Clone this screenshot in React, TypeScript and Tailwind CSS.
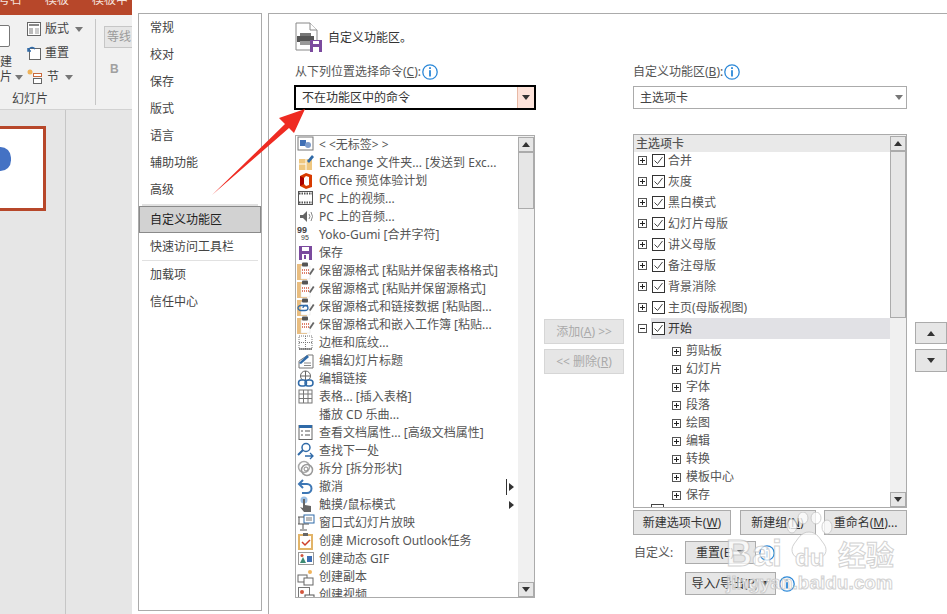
import type { ReactNode } from "react";

const navTop = ["常规", "校对", "保存", "版式", "语言", "辅助功能", "高级"];

type Cmd = { icon: string; label: string; arrow?: boolean; caret?: boolean };

const commands: Cmd[] = [
  { icon: "picture", label: "< <无标签> >" },
  { icon: "exchange", label: "Exchange 文件夹... [发送到 Exc..." },
  { icon: "office", label: "Office 预览体验计划" },
  { icon: "film", label: "PC 上的视频..." },
  { icon: "speaker", label: "PC 上的音频..." },
  { icon: "yoko", label: "Yoko-Gumi [合并字符]" },
  { icon: "save", label: "保存" },
  { icon: "paste", label: "保留源格式 [粘贴并保留表格格式]" },
  { icon: "paste", label: "保留源格式 [粘贴并保留源格式]" },
  { icon: "pastelink", label: "保留源格式和链接数据 [粘贴图..." },
  { icon: "paste", label: "保留源格式和嵌入工作簿 [粘贴..." },
  { icon: "border", label: "边框和底纹..." },
  { icon: "title", label: "编辑幻灯片标题" },
  { icon: "link", label: "编辑链接" },
  { icon: "table", label: "表格... [插入表格]" },
  { icon: "none", label: "播放 CD 乐曲..." },
  { icon: "props", label: "查看文档属性... [高级文档属性]" },
  { icon: "find", label: "查找下一处" },
  { icon: "split", label: "拆分 [拆分形状]" },
  { icon: "undo", label: "撤消", arrow: true, caret: true },
  { icon: "touch", label: "触摸/鼠标模式", arrow: true },
  { icon: "window", label: "窗口式幻灯片放映" },
  { icon: "task", label: "创建 Microsoft Outlook任务" },
  { icon: "gif", label: "创建动态 GIF" },
  { icon: "copy", label: "创建副本" },
  { icon: "video", label: "创建视频" },
];

const tabs = ["合并", "灰度", "黑白模式", "幻灯片母版", "讲义母版", "备注母版", "背景消除", "主页(母版视图)"];
const groups = ["剪贴板", "幻灯片", "字体", "段落", "绘图", "编辑", "转换", "模板中心", "保存"];

function CmdIcon({ name }: { name: string }) {
  const box = "h-[18px] w-[18px]";
  const wrap = (c: ReactNode) => (
    <svg viewBox="0 0 18 18" className={box}>
      {c}
    </svg>
  );
  switch (name) {
    case "picture":
      return wrap(
        <>
          <rect x="1" y="1" width="15" height="13" fill="#fff" stroke="#777" />
          <rect x="3" y="4" width="6" height="6" fill="#3f6fb5" />
          <circle cx="11" cy="9" r="3" fill="#7d9ccb" />
        </>,
      );
    case "exchange":
      return wrap(
        <>
          <path d="M2 5h7l6 0v11H2z" fill="#efc77f" />
          <path d="M9 5v5H2M9 10v6" stroke="#fff" fill="none" />
          <path d="M10 7l5-6 2 2-5 6z" fill="#2f6aa8" />
        </>,
      );
    case "office":
      return wrap(
        <>
          <path d="M9 1l6 2v12l-6 2-6-3V4z" fill="#d83b01" />
          <path d="M9 4l3 1v8l-3 1-2-2V6z" fill="#fff" />
          <path d="M3 4l4 2v6l-4 2z" fill="#a80000" />
        </>,
      );
    case "film":
      return wrap(
        <>
          <rect x="1.500" y="1.500" width="14" height="13" fill="#fff" stroke="#555" />
          <path d="M2 3.500h13M2 12.500h13" stroke="#555" strokeWidth="2" strokeDasharray="1.500 1" />
        </>,
      );
    case "speaker":
      return wrap(
        <>
          <path d="M3 7h3l4-4v11l-4-4H3z" fill="#666" />
          <path d="M12 6q2 2.500 0 5M14 4q3 4.500 0 9" stroke="#888" fill="none" />
        </>,
      );
    case "yoko":
      return (
        <div className="h-[18px] w-[18px] text-[9px] leading-[8px] text-[#444] [font-family:'Liberation_Sans',sans-serif]">
          <div className="font-bold">99</div>
          <div className="pl-[4px] text-[7px]">95</div>
        </div>
      );
    case "save":
      return wrap(
        <>
          <path d="M2 2h13v14H2z" fill="#7b4a9e" />
          <rect x="5" y="3" width="7" height="4" fill="#fff" />
          <rect x="5" y="10" width="7" height="6" fill="#fff" />
          <rect x="7" y="11" width="2" height="4" fill="#7b4a9e" />
        </>,
      );
    case "paste":
    case "pastelink":
      return wrap(
        <>
          <rect x="0" y="2" width="10" height="16" fill="#e9bd7f" />
          <rect x="4" y="4" width="9" height="13" fill="#fff" stroke="#ddd" strokeWidth="0.500" />
          <rect x="5" y="0.500" width="6" height="4" rx="1" fill="#555" />
          {name === "paste" ? (
            <path d="M5 8h7M5 11h7" stroke="#d2553c" strokeWidth="1.500" strokeDasharray="1 1" />
          ) : (
            <path d="M1 10a3 2.500 0 013-2.500h4a3 2.500 0 010 5H4a3 2.500 0 01-3-2.500zM6 10a3 2.500 0 013-2.500h2" fill="none" stroke="#2f6aa8" strokeWidth="1.300" />
          )}
          <path d="M12 12l4-6 1.500 1-4 6z" fill="#666" />
        </>,
      );
    case "border":
      return wrap(
        <>
          <rect x="2" y="2" width="13" height="13" fill="none" stroke="#777" strokeDasharray="1 1" />
          <path d="M2 8.500h13M8.500 2v13" stroke="#777" strokeDasharray="1 1" />
          <path d="M2 15h13" stroke="#444" />
        </>,
      );
    case "title":
      return wrap(
        <>
          <path d="M2 16V9l9-6h5v13z" fill="#fff" stroke="#777" />
          <path d="M2 11l8-8 2 2-8 7z" fill="#2f6aa8" />
          <path d="M7 11h7M7 13.500h7" stroke="#888" />
        </>,
      );
    case "link":
      return wrap(
        <>
          <circle cx="8.500" cy="6" r="5" fill="none" stroke="#666" />
          <path d="M4 6h9M8.500 1v9" stroke="#666" />
          <rect x="1.500" y="10" width="8" height="6" rx="3" fill="#fff" stroke="#2f6aa8" strokeWidth="1.500" />
          <rect x="8" y="10" width="8" height="6" rx="3" fill="none" stroke="#2f6aa8" strokeWidth="1.500" />
        </>,
      );
    case "table":
      return wrap(
        <>
          <rect x="2" y="2" width="13" height="13" fill="#fff" stroke="#777" />
          <path d="M2 6h13M2 10.500h13M6.500 2v13M11 2v13" stroke="#777" />
        </>,
      );
    case "props":
      return wrap(
        <>
          <rect x="2" y="1.500" width="13" height="14" fill="#fff" stroke="#666" />
          <rect x="2" y="1" width="13" height="3" fill="#2f6aa8" />
          <path d="M4 7h2M8 7h5M4 11h2M8 11h5" stroke="#555" />
        </>,
      );
    case "find":
      return wrap(
        <>
          <circle cx="9" cy="5.500" r="4" fill="none" stroke="#2f6aa8" strokeWidth="1.500" />
          <path d="M6 8l-5 5" stroke="#2f6aa8" strokeWidth="2" />
          <path d="M8 14h8M13 11l3 3-3 3" stroke="#2f6aa8" strokeWidth="1.300" fill="none" />
        </>,
      );
    case "split":
      return wrap(
        <>
          <circle cx="7" cy="7" r="5.500" fill="none" stroke="#aaa" strokeWidth="1.500" />
          <circle cx="10" cy="10" r="5.500" fill="none" stroke="#999" strokeWidth="1.500" />
          <circle cx="9" cy="9" r="2" fill="none" stroke="#888" />
        </>,
      );
    case "undo":
      return wrap(
        <path d="M6 2L2 6l4 4M2 6h8a4 4 0 010 9H5" fill="none" stroke="#3d77b5" strokeWidth="2" />,
      );
    case "touch":
      return wrap(
        <>
          <circle cx="7" cy="4" r="3.500" fill="#9dc0e4" />
          <path d="M6 3h2v6l6 1v6H7l-4-5 3 1z" fill="#666" />
        </>,
      );
    case "window":
      return wrap(
        <>
          <rect x="7" y="1" width="10" height="8" fill="#fff" stroke="#2f6aa8" />
          <path d="M9 4h6M9 6h6" stroke="#777" />
          <path d="M1 3h6M1 10h11M6 10v5M3 16h7M2 3v7" stroke="#555" fill="none" />
        </>,
      );
    case "task":
      return wrap(
        <>
          <rect x="2" y="3" width="13" height="14" fill="#fff" stroke="#e2b468" strokeWidth="2" />
          <rect x="6" y="1" width="5" height="3" fill="#666" />
          <path d="M5 10l3 3 5-5" fill="none" stroke="#cf3f2b" strokeWidth="1.500" />
        </>,
      );
    case "gif":
      return wrap(
        <>
          <rect x="1.500" y="2.500" width="15" height="12" fill="#fff" stroke="#999" />
          <path d="M3 13l3-6 3 6z" fill="#3d8b74" />
          <circle cx="5" cy="5.500" r="1.500" fill="#d2553c" />
          <rect x="10" y="6" width="5" height="6" fill="#3f6fb5" />
        </>,
      );
    case "copy":
      return wrap(
        <>
          <rect x="1" y="7" width="9" height="7" fill="#fff" stroke="#666" />
          <rect x="7" y="10" width="9" height="7" fill="#fff" stroke="#666" />
          <circle cx="13" cy="4" r="2" fill="#f0b35a" />
        </>,
      );
    case "video":
      return wrap(
        <>
          <rect x="1.500" y="1.500" width="11" height="13" fill="#fff" stroke="#777" />
          <circle cx="5" cy="6" r="2" fill="#d2553c" />
          <rect x="8" y="9" width="9" height="8" fill="#fff" stroke="#555" />
        </>,
      );
    default:
      return <div className={box} />;
  }
}

function Info() {
  return (
    <svg viewBox="0 0 16 16" className="h-4 w-4 shrink-0">
      <circle cx="8" cy="8" r="7.200" fill="#fff" stroke="#2b88d8" strokeWidth="1.300" />
      <rect x="7.100" y="3.200" width="1.800" height="1.800" fill="#2b88d8" />
      <rect x="7.100" y="6.200" width="1.800" height="6.300" fill="#2b88d8" />
    </svg>
  );
}

function Expander({ open }: { open?: boolean }) {
  return (
    <svg viewBox="0 0 9 9" className="h-[9px] w-[9px] shrink-0">
      <rect x="0.500" y="0.500" width="8" height="8" fill="#fff" stroke="#555" />
      <path d="M2 4.500h5" stroke="#222" />
      {!open && <path d="M4.500 2v5" stroke="#222" />}
    </svg>
  );
}

function Check() {
  return (
    <svg viewBox="0 0 13 13" className="h-[13px] w-[13px] shrink-0">
      <rect x="0.500" y="0.500" width="12" height="12" fill="#fff" stroke="#333" />
      <path d="M2.500 6.500l3 3 5-6.500" fill="none" stroke="#444" />
    </svg>
  );
}

function Tri({ up, className }: { up?: boolean; className?: string }) {
  return (
    <svg viewBox="0 0 8 5" className={`h-[5px] w-[8px] ${className ?? "fill-[#333]"}`}>
      <path d={up ? "M4 0l4 5H0z" : "M0 0h8L4 5z"} />
    </svg>
  );
}

function ScrollBar({ thumb, topGap }: { thumb: number; topGap: number }) {
  return (
    <div className="flex h-full w-[16px] shrink-0 flex-col bg-[#f0f0f0]" style={{ paddingTop: topGap }}>
      <div className="flex h-[15px] items-center justify-center border border-[#ababab] bg-[#e6e6e6]">
        <Tri up />
      </div>
      <div className="border border-[#ababab] bg-[#e6e6e6]" style={{ height: thumb }} />
      <div className="flex-1" />
      <div className="flex h-[15px] items-center justify-center border border-[#ababab] bg-[#e6e6e6]">
        <Tri />
      </div>
    </div>
  );
}

function Btn({ className, children }: { className: string; children: ReactNode }) {
  return (
    <div className={`flex items-center justify-center border bg-[#e6e6e6] ${className}`}>
      {children}
    </div>
  );
}

function Ribbon() {
  return (
    <>
      <div className="flex h-[15px] items-end gap-[23px] overflow-hidden bg-[#b7472a] pb-[9px] text-[12px] leading-[12px] whitespace-nowrap text-[#f5e3de]">
        <span className="-ml-[2px]">号名</span>
        <span>模板</span>
        <span>模板中</span>
      </div>
      <div className="flex h-[95px] overflow-hidden border-b border-[#d2d2d2] bg-[#f1f1f1] text-[12px] text-[#444]">
        <div className="flex w-[95px] shrink-0 flex-col">
          <div className="flex h-[75px]">
            <div className="w-[27px] shrink-0 overflow-hidden pt-[10px]">
              <div className="-ml-[8px] h-[22px] w-[18px] rounded-[2px] border border-[#777] bg-white" />
              <div className="mt-[7px] leading-[16px]">建</div>
              <div className="flex items-center gap-[3px] leading-[14px]">
                片<Tri className="fill-[#777]" />
              </div>
            </div>
            <div className="flex flex-col pt-[2px] leading-[24px]">
              <div className="flex items-center gap-[4px]">
                <svg viewBox="0 0 14 14" className="h-[14px] w-[14px]">
                  <rect x="0.500" y="0.500" width="13" height="13" fill="#fff" stroke="#666" />
                  <path d="M2 3h10" stroke="#888" strokeWidth="2" />
                  <rect x="2" y="6" width="4" height="6" fill="#bbb" />
                  <path d="M8 7h4M8 9h4M8 11h4" stroke="#999" />
                </svg>
                版式
                <Tri className="ml-[2px] fill-[#777]" />
              </div>
              <div className="flex items-center gap-[4px]">
                <svg viewBox="0 0 14 14" className="h-[14px] w-[14px]">
                  <rect x="2.500" y="2.500" width="11" height="11" fill="#fff" stroke="#666" />
                  <path d="M1 5a4 4 0 017-2M1 2v3h3" fill="none" stroke="#2f6aa8" strokeWidth="1.500" />
                </svg>
                重置
              </div>
              <div className="flex items-center gap-[4px]">
                <svg viewBox="0 0 16 16" className="h-[16px] w-[16px]">
                  <circle cx="3" cy="3" r="2.500" fill="#f0b35a" />
                  <rect x="6.500" y="4.500" width="8" height="3" fill="#fff" stroke="#c96a3e" />
                  <rect x="6.500" y="9.500" width="8" height="5" fill="#fff" stroke="#666" />
                </svg>
                节
                <Tri className="ml-[2px] fill-[#777]" />
              </div>
            </div>
          </div>
          <div className="pl-[12px] leading-[18px]">幻灯片</div>
        </div>
        <div className="mt-[4px] h-[86px] w-px shrink-0 bg-[#c6c6c6]" />
        <div className="flex-1 overflow-hidden pt-[11px] pl-[8px]">
          <div className="flex h-[22px] w-[40px] items-center border border-[#c6c6c6] bg-[#e6e6e6] pl-[2px] whitespace-nowrap text-[#9a9a9a]">
            等线
          </div>
          <div className="mt-[12px] pl-[6px] text-[12px] font-bold text-[#a0a0a0] [font-family:'Liberation_Sans',sans-serif]">
            B
          </div>
        </div>
      </div>
    </>
  );
}

function Slides() {
  return (
    <div className="flex flex-1 bg-[#e6e6e6]">
      <div className="w-[66px] shrink-0 border-r border-[#c6c6c6] pt-[16px]">
        <div className="-ml-[3px] flex h-[85px] w-[49px] items-center overflow-hidden border-[3px] border-[#b7472a] bg-white">
          <div className="mb-[20px] -ml-[10px] h-[24px] w-[21px] rounded-full bg-[#4472c4]" />
        </div>
      </div>
    </div>
  );
}

function Nav() {
  const item = "flex h-[27px] items-center pl-[11px]";
  return (
    <div className="mt-[13px] mb-[3px] ml-[6px] flex w-[124px] shrink-0 flex-col border border-[#ababab] bg-white text-[12px] text-[#444]">
      {navTop.map((n) => (
        <div key={n} className={item}>
          {n}
        </div>
      ))}
      <div className="mx-[3px] mt-[1px] h-[2px] bg-[#e1e1e1]" />
      <div className="flex h-[27px] items-center border border-[#8a8a8a] bg-[#d2d2d2] pl-[10px] text-[#222]">
        自定义功能区
      </div>
      <div className={item}>快速访问工具栏</div>
      <div className="mx-[3px] h-px bg-[#e1e1e1]" />
      <div className={item}>加载项</div>
      <div className={item}>信任中心</div>
    </div>
  );
}

function CommandList() {
  return (
    <div className="flex h-[463px] w-[240px] overflow-hidden border border-[#ababab] bg-white">
      <div className="min-w-0 flex-1 overflow-hidden">
        {commands.map((c) => (
          <div key={c.label} className="flex h-[18px] items-center whitespace-nowrap">
            <div className="w-[23px] shrink-0 pl-[1px]">
              <CmdIcon name={c.icon} />
            </div>
            <span className="flex-1 text-[12px] text-[#555]">{c.label}</span>
            {c.caret && <div className="mr-[2px] h-[16px] w-px bg-[#333]" />}
            {c.arrow && (
              <svg viewBox="0 0 5 8" className="mr-[4px] h-[8px] w-[5px] fill-[#333]">
                <path d="M0 0l5 4-5 4z" />
              </svg>
            )}
          </div>
        ))}
      </div>
      <ScrollBar thumb={57} topGap={1} />
    </div>
  );
}

function RibbonTree() {
  return (
    <div className="flex h-[374px] w-[274px] overflow-hidden border border-[#ababab] bg-white text-[12px] text-[#555]">
      <div className="min-w-0 flex-1 overflow-hidden">
        <div className="h-[17px] bg-[#e9e9e9] pl-[2px] leading-[17px] font-medium">主选项卡</div>
        <div className="-mt-[2px]">
          {tabs.map((t) => (
            <div key={t} className="relative flex h-[21px] items-center pl-[4px]">
              <Expander />
              <div className="ml-[5px]">
                <Check />
              </div>
              <span className="ml-[3px]">{t}</span>
            </div>
          ))}
          <div className="flex h-[21px] items-center pl-[4px]">
            <Expander open />
            <div className="ml-[4px] flex h-[21px] flex-1 items-center bg-[#e1e1e5] pl-[1px]">
              <Check />
              <span className="ml-[3px] text-[#333]">开始</span>
            </div>
          </div>
          <div className="pt-[3px]">
            {groups.map((g) => (
              <div key={g} className="flex h-[18px] items-center pl-[38px]">
                <Expander />
                <span className="ml-[5px]">{g}</span>
              </div>
            ))}
          </div>
          <div className="ml-[17px] h-[13px] w-[13px] border border-[#444]" />
        </div>
      </div>
      <ScrollBar thumb={167} topGap={1} />
    </div>
  );
}

function Settings() {
  const on = "border-[#ababab] text-[#333]";
  const off = "border-[#d6d6d6] text-[#aaaaaa]";
  return (
    <div className="mt-[13px] ml-[6px] flex min-w-0 flex-1 flex-col border-t border-l border-[#ababab] bg-white pt-[8px] pl-[26px] text-[12px] text-[#555]">
      <div className="flex h-[30px] items-center">
        <svg viewBox="0 0 28 30" className="h-[30px] w-[28px]">
          <path d="M1 1h14l7 7v20H1z" fill="#fff" stroke="#888" />
          <path d="M15 1v7h7" fill="#fff" stroke="#888" />
          <rect x="5" y="11" width="11" height="4" fill="#777" />
          <rect x="2" y="14" width="17" height="6" fill="#555" />
          <rect x="5" y="19" width="11" height="4" fill="#999" />
          <rect x="15" y="18" width="12" height="12" fill="#7b4a9e" />
          <rect x="18" y="19" width="6" height="3" fill="#fff" />
          <rect x="18" y="25" width="6" height="5" fill="#fff" />
        </svg>
        <span className="ml-[5px] pt-[2px] text-[#333]">自定义功能区。</span>
      </div>
      <div className="flex pt-[10px]">
        <div className="flex w-[240px] shrink-0 flex-col">
          <div className="flex h-[20px] items-center gap-[1px]">
            <span>
              从下列位置选择命令(<span className="underline">C</span>):
            </span>
            <Info />
          </div>
          <div className="-mx-px mt-[3px] flex h-[25px] items-center justify-between border-2 border-black bg-white pl-[6px] text-[#333]">
            不在功能区中的命令
            <div className="flex h-full w-[17px] items-center justify-center border-l border-[#e8b9a5] bg-[#fde3da]">
              <Tri />
            </div>
          </div>
          <div className="mt-[25px]">
            <CommandList />
          </div>
        </div>
        <div className="flex w-[98px] shrink-0 flex-col gap-[5px] pt-[257px] pl-[9px]">
          <Btn className={`h-[25px] w-[80px] ${off}`}>
            添加(<span className="underline">A</span>) &gt;&gt;
          </Btn>
          <Btn className={`h-[25px] w-[80px] ${off}`}>
            &lt;&lt; 删除(<span className="underline">R</span>)
          </Btn>
        </div>
        <div className="flex w-[274px] shrink-0 flex-col">
          <div className="flex h-[20px] items-center gap-[1px]">
            <span>
              自定义功能区(<span className="underline">B</span>):
            </span>
            <Info />
          </div>
          <div className="mt-[4px] flex h-[23px] items-center justify-between border border-[#ababab] bg-white pr-[3px] pl-[6px] text-[#444]">
            主选项卡
            <Tri className="fill-[#777]" />
          </div>
          <div className="mt-[25px]">
            <RibbonTree />
          </div>
          <div className="mt-[2px] flex justify-between">
            <Btn className={`h-[25px] w-[98px] ${on}`}>
              新建选项卡(<span className="underline">W</span>)
            </Btn>
            <Btn className={`h-[25px] w-[76px] ${on}`}>
              新建组(<span className="underline">N</span>)
            </Btn>
            <Btn className={`h-[25px] w-[83px] ${on}`}>
              重命名(<span className="underline">M</span>)...
            </Btn>
          </div>
          <div className="mt-[6px] flex items-center">
            <span className="ml-[1px] w-[51px]">自定义:</span>
            <Btn className={`h-[23px] w-[71px] gap-[3px] ${on}`}>
              重置(E)
              <Tri />
            </Btn>
            <div className="ml-[3px]">
              <Info />
            </div>
          </div>
          <div className="mt-[8px] flex items-center pl-[52px]">
            <Btn className={`h-[23px] w-[91px] gap-[3px] ${on}`}>
              导入/导出(P)
              <Tri />
            </Btn>
            <div className="ml-[3px]">
              <Info />
            </div>
          </div>
        </div>
        <div className="flex flex-col gap-[5px] pt-[260px] pl-[8px]">
          <Btn className={`h-[22px] w-[32px] ${on}`}>
            <Tri up />
          </Btn>
          <Btn className={`h-[23px] w-[32px] ${on}`}>
            <Tri />
          </Btn>
        </div>
      </div>
    </div>
  );
}

export default function App() {
  return (
    <div className="relative flex h-[614px] w-[947px] overflow-hidden bg-white [font-family:'Noto_Sans','Noto_Sans_CJK_SC',sans-serif]">
      <div className="flex w-[132px] shrink-0 flex-col overflow-hidden">
        <Ribbon />
        <Slides />
      </div>
      <Nav />
      <Settings />

      {/* red arrow over the dialog */}
      <svg viewBox="0 0 947 614" className="pointer-events-none absolute top-0 left-0 h-[614px] w-[947px]">
        <path d="M212 195L285 124 279 118 305 109 294 133 289 128z" fill="#ef2b22" />
      </svg>

      {/* baidu watermark */}
      <div className="pointer-events-none absolute top-[510px] left-[726px] h-[90px] w-[172px] [font-family:'Liberation_Sans',sans-serif] text-white opacity-75 [-webkit-text-stroke:1px_#c4c4c4]">
        <svg viewBox="0 0 50 52" className="absolute top-[2px] left-[58px] h-[52px] w-[50px] fill-white stroke-[#c4c4c4]">
          <ellipse cx="8" cy="14" rx="5" ry="7" />
          <ellipse cx="19" cy="6" rx="5" ry="6" />
          <ellipse cx="32" cy="6" rx="5" ry="6" />
          <ellipse cx="43" cy="15" rx="5" ry="7" />
          <path d="M25 20c8 0 11 7 15 12 5 7 0 15-7 14-4 0-6-2-8-2s-4 2-8 2c-7 1-12-7-7-14 4-5 7-12 15-12z" />
        </svg>
        <div className="absolute top-[26px] left-0 text-[36px] leading-[36px] font-bold">Bai</div>
        <div className="absolute top-[36px] left-[69px] text-[24px] leading-[24px] font-bold">du</div>
        <div className="absolute top-[27px] left-[112px] text-[28px] leading-[34px] font-bold whitespace-nowrap [font-family:'Noto_Sans_CJK_SC',sans-serif]">
          经验
        </div>
        <div className="absolute top-[62px] left-0 text-[19px] leading-[22px] font-bold whitespace-nowrap">
          jingyan.baidu.com
        </div>
      </div>
    </div>
  );
}
